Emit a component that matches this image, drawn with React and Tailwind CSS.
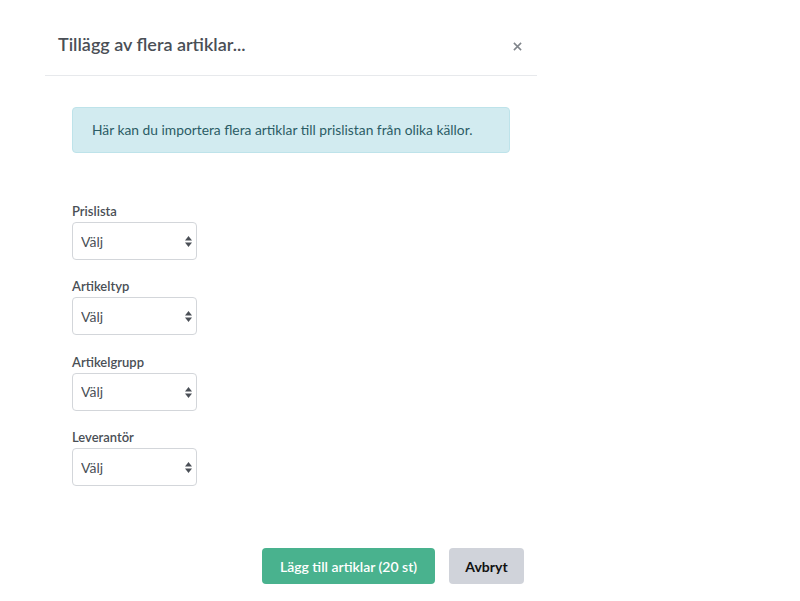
import { useState } from 'react';

const FALT = ['Prislista', 'Artikeltyp', 'Artikelgrupp', 'Leverantör'];

function Valj({ label }) {
    const [val, setVal] = useState('');
    return (
        <div className="flex flex-col">
            <label className="text-[13px] leading-[16px] font-semibold text-[#4a4f56] mb-[3px]">{label}</label>
            <div className="relative w-[125px] h-[38px]">
                <select
                    value={val}
                    onChange={(e) => setVal(e.target.value)}
                    className="appearance-none w-full h-full rounded-[4px] border border-[#d3d6da] bg-white pl-[8px] text-[14px] text-[#4a4f56] outline-none"
                >
                    <option value="">Välj</option>
                </select>
                {/* pilar */}
                <svg className="absolute right-[5px] top-[14px] pointer-events-none" width="7" height="11" viewBox="0 0 7 11">
                    <path d="M3.5 0 L7 4.5 H0 Z" fill="#4a4f56" />
                    <path d="M3.5 11 L7 6.5 H0 Z" fill="#4a4f56" />
                </svg>
            </div>
        </div>
    );
}

export default function App() {
    return (
        <div className="w-[800px] h-[601px] bg-white font-['Lato','Noto_Sans',sans-serif]">
            <div className="ml-[45px] w-[492px]">
                {/* Header */}
                <div className="h-[76px] border-b border-[#e7e9ec] flex items-start justify-between pl-[13px] pr-[15px] pt-[31px]">
                    <h2 className="text-[18px] leading-[26px] font-semibold text-[#4a4f56]">Tillägg av flera artiklar...</h2>
                    <button type="button" className="mt-[11px] text-[#80858b]">
                        <svg width="9" height="9" viewBox="0 0 10 10" stroke="currentColor" strokeWidth="1.7">
                            <path d="M1 1 L9 9 M9 1 L1 9" />
                        </svg>
                    </button>
                </div>

                {/* Body */}
                <div className="px-[27px] pt-[31px]">
                    <div className="w-[438px] h-[46px] rounded-[4px] bg-[#d2ebf0] border border-[#bee3ea] flex items-center pl-[19px] text-[13.8px] text-[#2b5c65]">
                        Här kan du importera flera artiklar till prislistan från olika källor.
                    </div>

                    <div className="mt-[50px] flex flex-col gap-[18.4px]">
                        {FALT.map((f) => <Valj key={f} label={f} />)}
                    </div>
                </div>

                {/* Knappar */}
                <div className="mt-[62px] flex justify-end gap-[14px] pr-[13px]">
                    <button type="button" className="w-[173px] h-[36px] rounded-[4px] bg-[#49b28e] text-white text-[14px] font-semibold">
                        Lägg till artiklar (20 st)
                    </button>
                    <button type="button" className="w-[75px] h-[36px] rounded-[4px] bg-[#d0d3da] text-[#111] text-[14px] font-bold">
                        Avbryt
                    </button>
                </div>
            </div>
        </div>
    );
}
